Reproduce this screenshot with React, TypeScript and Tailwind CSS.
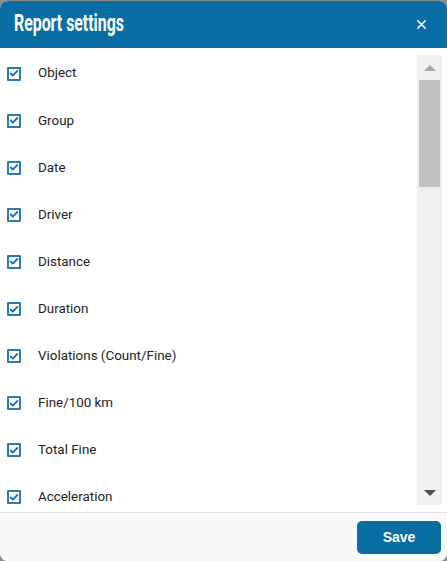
import { Check, X } from 'lucide-react'

const fields = [
    'Object',
    'Group',
    'Date',
    'Driver',
    'Distance',
    'Duration',
    'Violations (Count/Fine)',
    'Fine/100 km',
    'Total Fine',
    'Acceleration',
]

export default function App() {
    return (
        <div className="h-[561px] w-[447px] bg-[#8c8c8c] pt-[1px] font-['Roboto',sans-serif]">
            <div className="flex h-[560px] flex-col overflow-hidden rounded-[8px] bg-white">
                {/* Header */}
                <div className="flex h-[47px] shrink-0 items-center justify-between bg-[#0a6ea4] pl-[14px] pr-[18px]">
                    <span className="inline-block origin-left scale-x-[0.69] whitespace-nowrap font-['Roboto',sans-serif] text-[23px] font-bold text-white">
                        Report settings
                    </span>
                    <X className="h-[15px] w-[15px] text-white" strokeWidth={2.5} />
                </div>

                {/* Body */}
                <div className="relative flex min-h-0 flex-1">
                    <div className="flex-1 overflow-hidden pt-[2px]">
                        {fields.map((f) => (
                            <div key={f} className="flex h-[47.1px] items-center">
                                <div className="ml-[7px] flex h-[14px] w-[14px] items-center justify-center rounded-[1px] border-2 border-[#2a7ab8] bg-white">
                                    <Check className="h-[11px] w-[11px] text-[#1c6fb0]" strokeWidth={4.5} />
                                </div>
                                <span className="ml-[17px] text-[13.4px] text-[#222]">{f}</span>
                            </div>
                        ))}
                    </div>
                    {/* Scrollbar */}
                    <div className="mr-[5px] mt-[7px] mb-[7px] flex w-[25px] flex-col bg-[#f1f1f1]">
                        <div className="flex h-[25px] items-center justify-center">
                            <div className="h-0 w-0 border-x-[6px] border-b-[6px] border-x-transparent border-b-[#a3a3a3]" />
                        </div>
                        <div className="mx-[2px] h-[107px] bg-[#c1c1c1]" />
                        <div className="flex-1" />
                        <div className="flex h-[25px] items-center justify-center">
                            <div className="h-0 w-0 border-x-[6px] border-t-[6px] border-x-transparent border-t-[#505050]" />
                        </div>
                    </div>
                </div>

                {/* Footer */}
                <div className="flex h-[49px] shrink-0 items-center justify-end border-t border-[#e3e3e3] bg-[#f8f8f8] pr-[6px]">
                    <button className="h-[33px] w-[84px] rounded-[5px] bg-[#0a6ea4] font-['Liberation_Sans',sans-serif] text-[14px] font-bold text-white">
                        Save
                    </button>
                </div>
            </div>
        </div>
    )
}
